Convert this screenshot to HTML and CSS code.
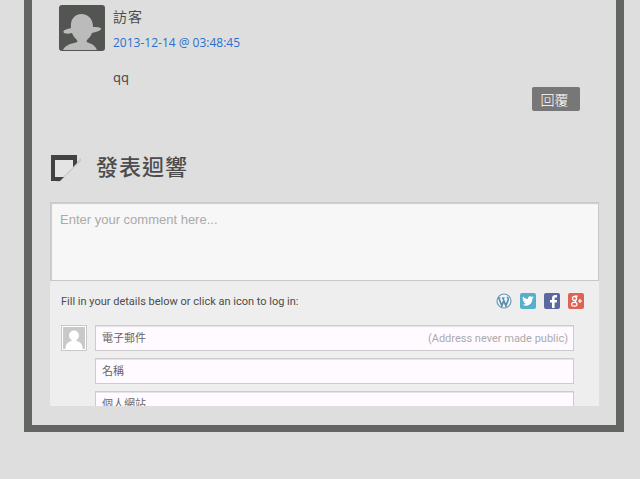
FILE: index.html
```html
<!DOCTYPE html>
<html lang="zh-Hant">
  <head>
    <meta charset="utf-8">
    <title>發表迴響</title>
    <link rel="stylesheet" href="styles.css">
  </head>
  <body>
    <main class="page">
      <article class="comment">
        <svg class="avatar" viewBox="0 0 46 46" aria-hidden="true">
          <rect width="46" height="46" rx="3" fill="#535553"/>
          <path fill="#bbb" d="M4 45c2-4 6-6 11-7 3-1 4-1 3-3-2-2-4-4-5-7-4 1-8 1-8.500-1S8 24 12 23C11 14 16 9 22.500 9S34 14 34 22c3 0 7 0 8 1.500S38 27 33 28c-1 3-3 5-5 7-1 2 0 2 2 3 4 1 6 3 8 7z"/>
        </svg>
        <div class="comment-body">
          <h3>訪客</h3>
          <a class="date" href="#comment">2013-12-14 @ 03:48:45</a>
          <p>qq</p>
        </div>
      </article>
      <div class="reply">
        <button type="button">回覆</button>
      </div>

      <h2 class="title">
        <svg width="32" height="32" viewBox="0 0 32 32" aria-hidden="true">
          <path fill="#c6c6c6" d="M6 30 31 6v3L9 30z"/>
          <path fill="#424242" d="M1 3h26v8l-4 4V8H5v17h9l-4 4H1z"/>
          <path fill="#e4e4e4" d="M5 8h18v7L13 25H5z"/>
        </svg>
        發表迴響
      </h2>

      <form class="respond">
        <textarea aria-label="Comment" placeholder="Enter your comment here..."></textarea>
        <div class="login">
          <span>Fill in your details below or click an icon to log in:</span>
          <div class="services">
            <a href="#wordpress" aria-label="WordPress">
              <svg viewBox="0 0 16 16">
                <circle cx="8" cy="8" r="7" fill="#f3f6f8" stroke="#6a9db8" stroke-width="1.2"/>
                <path fill="none" stroke="#5a8fae" stroke-width="1.7" d="m2.700 4.800 3.100 8.100 2.300-6.200M6.700 4.800l3.200 8.100 2.300-6.200c.3-1.100-.9-1.800-.6-3"/>
                <path stroke="#5a8fae" stroke-width=".8" d="M2 4.800h2.700M5.800 4.800h3.100"/>
              </svg>
            </a>
            <a href="#twitter" aria-label="Twitter">
              <svg viewBox="0 0 16 16">
                <rect width="16" height="16" rx="2" fill="#58afcb"/>
                <path fill="#fff" d="M14 4.500l-1.500.3 1-1.500-1.600.6C10 2.300 7.600 3.800 8 6 5.900 6 4.200 5 3 3.500c-.7 1.300-.3 2.600.7 3.400l-1-.3c0 1.200.8 2.100 2 2.500h-1c.3.9 1.100 1.500 2.200 1.600-1 .8-2.200 1.100-3.500 1 4.800 2.700 10.200-.3 9.900-5.900z"/>
              </svg>
            </a>
            <a href="#facebook" aria-label="Facebook">
              <svg viewBox="0 0 16 16">
                <rect width="16" height="16" rx="2" fill="#5b68a0"/>
                <path fill="#fff" d="M8 15V9.500H6V7h2V5.300C8 3.200 9.300 2 11.300 2H13v2.500h-1.200c-.9 0-1.200.4-1.200 1.200V7H13l-.3 2.500h-2.100V15z"/>
              </svg>
            </a>
            <a href="#google" aria-label="Google+">
              <svg viewBox="0 0 16 16">
                <rect width="16" height="16" rx="2" fill="#dd6354"/>
                <circle cx="6.500" cy="5.500" r="2" fill="none" stroke="#fff" stroke-width="1.300"/>
                <ellipse cx="6.300" cy="11.300" rx="2.700" ry="1.900" fill="none" stroke="#fff" stroke-width="1.200"/>
                <path fill="none" stroke="#fff" stroke-width="1.200" d="M6.500 3.200h3.200M7 7.500l1.300 2.300M10 8h4M12 6v4"/>
              </svg>
            </a>
          </div>
        </div>
        <div class="details">
          <svg class="guest" viewBox="0 0 22 22" aria-hidden="true">
            <rect width="22" height="22" fill="#c9c9c9"/>
            <circle cx="11" cy="8.500" r="5" fill="#fff"/>
            <path fill="#fff" d="M8.500 12h5v2c4 1 6 3 6 8h-17c0-5 2-7 6-8z"/>
          </svg>
          <div class="fields">
            <div class="field">
              <label for="email">電子郵件</label>
              <input id="email" type="email" placeholder="(Address never made public)">
            </div>
            <div class="field">
              <label for="author">名稱</label>
              <input id="author" type="text">
            </div>
            <div class="field">
              <label for="url">個人網站</label>
              <input id="url" type="url">
            </div>
          </div>
        </div>
      </form>
    </main>
  </body>
</html>
```

FILE: styles.css
```css
* {
  box-sizing: border-box;
}
body {
  margin: 0;
  background-color: #dedede;
  color: #4c4c4c;
  font-family: "Liberation Sans", "Noto Sans CJK TC", sans-serif;
}
.page {
  margin: 0 16px 0 24px;
  padding: 5px 17px 19px 18px;
  border: solid #636563;
  border-width: 0 8px 7px;
}
.comment {
  display: flex;
  gap: 8px;
  padding-left: 9px;
}
.avatar {
  width: 46px;
  height: 46px;
}
.comment h3 {
  margin: 0 0 6px;
  font-size: 14px;
  font-weight: 400;
  line-height: 24px;
  letter-spacing: 1px;
}
.date {
  display: block;
  color: #2b6fd0;
  font-family: "Open Sans", sans-serif;
  font-size: 12px;
  line-height: 16px;
  text-decoration: none;
}
.comment p {
  margin: 16px 0 0;
  font-family: "Noto Sans", sans-serif;
  font-size: 13px;
  line-height: 20px;
}
.reply {
  display: flex;
  justify-content: flex-end;
  padding-right: 19px;
}
.reply button {
  width: 48px;
  height: 24px;
  padding: 0 3px 0 0;
  border: 0;
  border-radius: 2px;
  background-color: #777;
  color: #fff;
  font-family: "Noto Sans CJK TC", sans-serif;
  font-size: 14px;
  font-weight: 300;
  line-height: 24px;
}
.title {
  display: flex;
  align-items: center;
  gap: 14px;
  margin: 39px 0 16px;
  font-size: 22px;
  font-weight: 500;
  line-height: 36px;
  letter-spacing: 1px;
}
.respond {
  height: 204px;
  overflow: hidden;
  background-color: #eee;
}
textarea {
  display: block;
  width: 100%;
  height: 79px;
  padding: 9px;
  border: 1px solid #c8c8c8;
  background-color: #f7f7f7;
  box-shadow: inset 1px 1px 1px #ccc;
  font-family: inherit;
  font-size: 13px;
  line-height: 16px;
  resize: none;
}
::placeholder {
  color: #aaa;
  opacity: 1;
}
.login {
  display: flex;
  align-items: center;
  justify-content: space-between;
  height: 40px;
  padding: 0 15px 0 11px;
  font-family: Roboto, sans-serif;
  font-size: 11px;
}
.services {
  display: flex;
  gap: 8px;
}
.services a,
.services svg {
  display: block;
  width: 16px;
  height: 16px;
}
.details {
  display: flex;
  align-items: flex-start;
  gap: 8px;
  padding: 4px 25px 0 11px;
}
.guest {
  width: 26px;
  height: 26px;
  padding: 1px;
  border: 1px solid #c8c8c8;
  background-color: #fff;
}
.fields {
  flex: 1;
  display: grid;
  gap: 7px;
}
.field {
  display: flex;
  align-items: center;
  height: 26px;
  padding: 0 5px 0 6px;
  border: 1px solid #ccc;
  background-color: #fffaff;
  box-shadow: inset 0 1px 0 #e4e4e4;
  color: #666;
  font-size: 11px;
  line-height: 16px;
}
.field input {
  flex: 1;
  min-width: 0;
  padding: 0;
  border: 0;
  outline: 0;
  background: none;
  font-family: Roboto, sans-serif;
  font-size: 11px;
  text-align: right;
}
```
